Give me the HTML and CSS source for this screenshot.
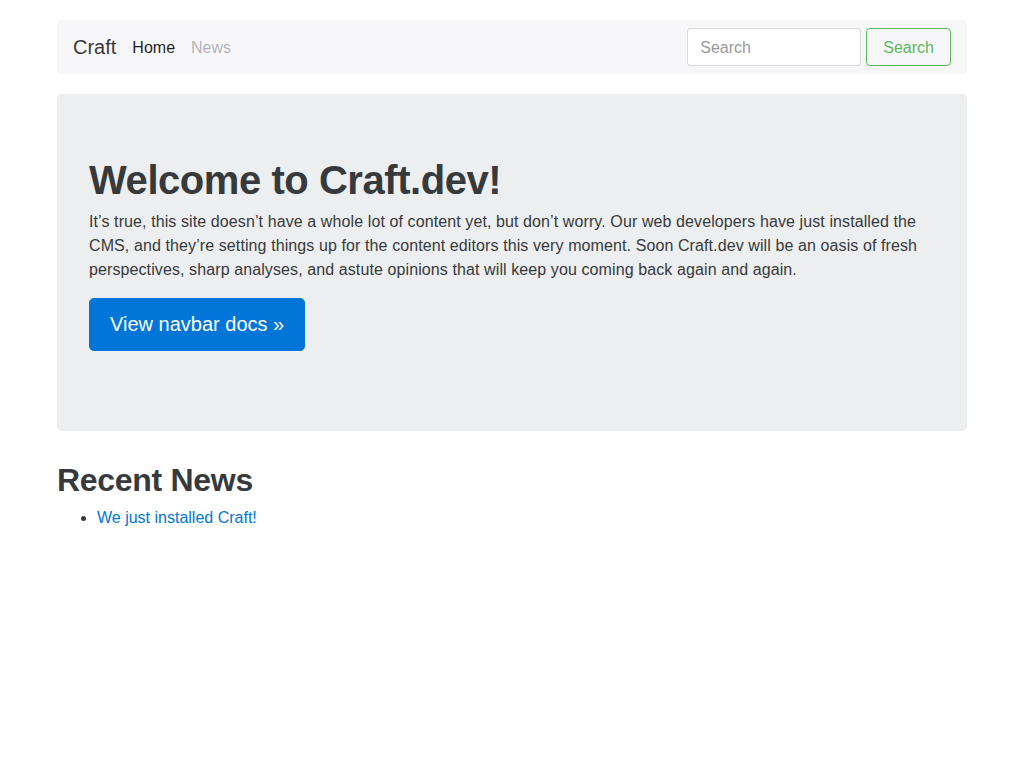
FILE: index.html
```html
<!DOCTYPE html>
<html lang="en">
<head>
<meta charset="utf-8">
<title>Craft.dev</title>
<link rel="stylesheet" href="styles.css">
</head>
<body>
<div class="container">
  <nav class="navbar">
    <div class="nav-left">
      <a class="brand" href="#">Craft</a>
      <a class="nav-link active" href="#">Home</a>
      <a class="nav-link" href="#">News</a>
    </div>
    <form class="search-form">
      <input class="form-control" type="text" placeholder="Search">
      <button class="btn-outline-success" type="button">Search</button>
    </form>
  </nav>

  <div class="jumbotron">
    <h1 class="jumbo-title">Welcome to Craft.dev!</h1>
    <p class="lead-text">It’s true, this site doesn’t have a whole lot of content yet, but don’t worry. Our web developers have just installed the CMS, and they’re setting things up for the content editors this very moment. Soon Craft.dev will be an oasis of fresh perspectives, sharp analyses, and astute opinions that will keep you coming back again and again.</p>
    <div class="btn-row"><a class="btn-primary" href="#">View navbar docs »</a></div>
  </div>

  <h2 class="section-title">Recent News</h2>
  <ul class="news-list">
    <li><a href="#">We just installed Craft!</a></li>
  </ul>
</div>
</body>
</html>
```

FILE: styles.css
```css
* { box-sizing: border-box; }
html, body { margin: 0; padding: 0; }
body {
  font-family: "Liberation Sans", Arial, sans-serif;
  font-size: 16px;
  line-height: 1.5;
  color: #373a3c;
  background: #fff;
}
a { color: #0275d8; text-decoration: none; }

.container {
  width: 940px;
  margin: 0 auto;
  padding: 20px 15px 0;
}

.navbar {
  display: flex;
  justify-content: space-between;
  align-items: center;
  background: #f7f7f9;
  border-radius: 4px;
  padding: 8px 16px;
  margin-bottom: 20px;
}
.nav-left { display: flex; align-items: center; }
.brand {
  font-size: 20px;
  line-height: 30px;
  color: rgba(0,0,0,.8);
  margin-right: 16px;
}
.nav-link {
  color: rgba(0,0,0,.3);
  line-height: 24px;
  padding-top: 2px;
}
.nav-link + .nav-link { margin-left: 16px; }
.nav-link.active { color: rgba(0,0,0,.9); }

.search-form { display: flex; align-items: center; gap: 5px; margin: 0; }
.form-control {
  width: 174px;
  height: 38px;
  padding: 9px 12px 7px;
  font-family: inherit;
  font-size: 16px;
  line-height: 20px;
  color: #55595c;
  background: #fff;
  border: 1px solid rgba(0,0,0,.15);
  border-radius: 4px;
  outline: none;
}
.form-control::placeholder { color: #999; opacity: 1; }
.btn-outline-success {
  height: 38px;
  padding: 9px 16px 7px;
  font-family: inherit;
  font-size: 16px;
  line-height: 20px;
  color: #5cb85c;
  background: transparent;
  border: 1px solid #5cb85c;
  border-radius: 4px;
}

.jumbotron {
  background: #eceeef;
  border-radius: 4.8px;
  padding: 64px 32px;
  margin-bottom: 32px;
}
.jumbo-title {
  margin: 0 0 8px;
  font-size: 40px;
  line-height: 1.1;
  font-weight: 700;
  letter-spacing: -0.45px;
}
.lead-text { margin: 0 0 16px; letter-spacing: 0.1px; }
.btn-row { margin-bottom: 16px; display: flex; }
.btn-primary {
  display: block;
  padding: 12px 20px;
  font-size: 20px;
  line-height: 26.67px;
  color: #fff;
  background: #0275d8;
  border: 1px solid #0275d8;
  border-radius: 4.8px;
}

.section-title {
  margin: 0 0 8px;
  font-size: 32px;
  line-height: 1.1;
  font-weight: 700;
  letter-spacing: -0.3px;
}
.news-list { margin: 0 0 16px; padding-left: 40px; }
```
